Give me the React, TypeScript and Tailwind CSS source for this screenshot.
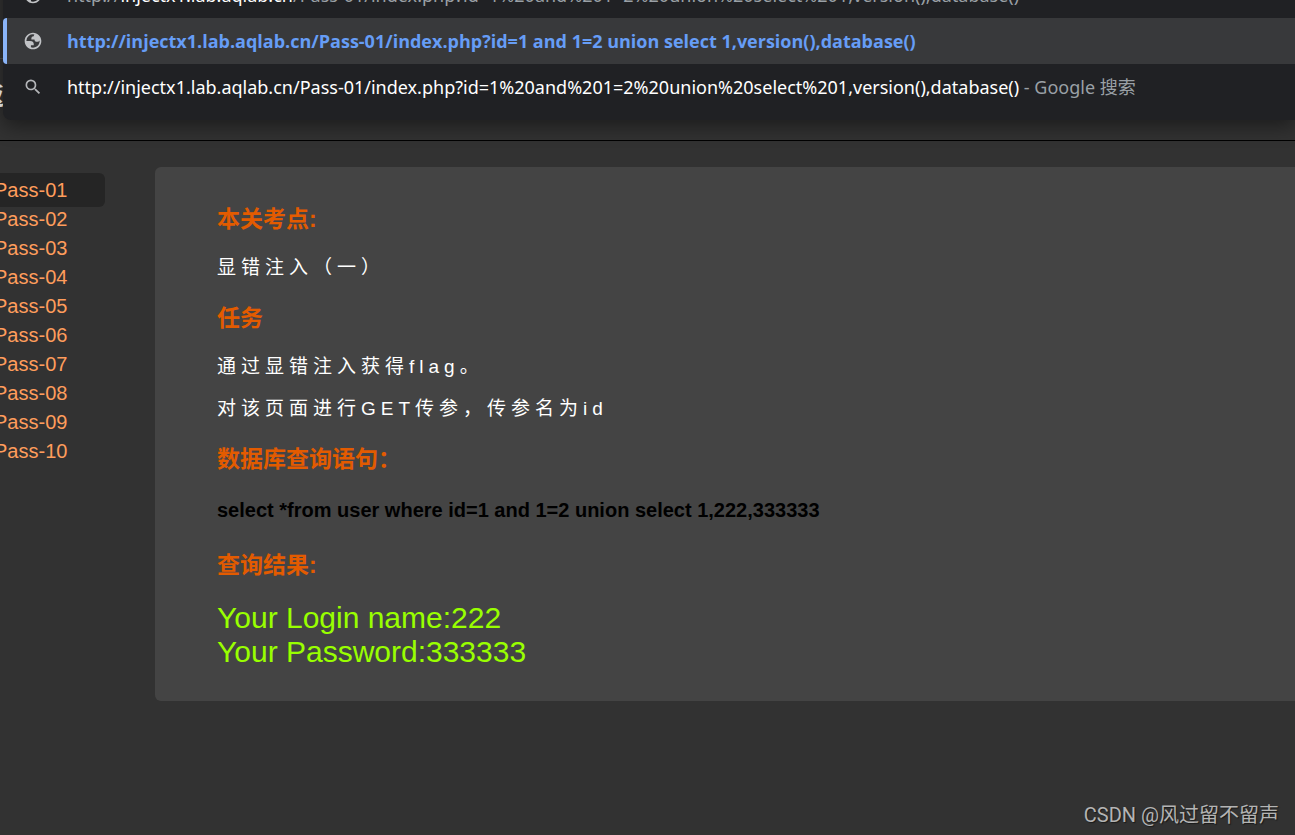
import React from "react";

const passes = ["01", "02", "03", "04", "05", "06", "07", "08", "09", "10"];

function GlobeIcon() {
  return (
    <svg viewBox="0 0 24 24" className="size-5 shrink-0 fill-[#c1c3c6]" aria-hidden="true">
      <path
        fillRule="evenodd"
        d="M12 2C6.48 2 2 6.48 2 12s4.48 10 10 10 10-4.48 10-10S17.52 2 12 2zM4 12h4.4c3.407.022 4.922 1.73 4.543 5.127H9.488v2.47a8.004 8.004 0 0 0 10.498-8.083C19.327 12.504 18.332 13 17 13c-2.137 0-3.206-.916-3.206-2.75h-3.748c-.274-2.728.683-4.092 2.87-4.092 0-.975.327-1.597.811-1.97A8.004 8.004 0 0 0 4 12z"
      />
    </svg>
  );
}

function SearchIcon() {
  return (
    <svg viewBox="0 0 24 24" className="size-5 shrink-0 fill-[#b4b6b9]" aria-hidden="true">
      <path d="M15.5 14h-.79l-.28-.27A6.471 6.471 0 0 0 16 9.5 6.5 6.5 0 1 0 9.5 16c1.61 0 3.09-.59 4.23-1.57l.27.28v.79l5 4.99L20.49 19l-4.99-5zm-6 0C7.01 14 5 11.99 5 9.5S7.01 5 9.5 5 14 7.01 14 9.5 11.99 14 9.5 14z" />
    </svg>
  );
}

function Suggestions() {
  return (
    <ul className="absolute -top-[28px] right-0 left-[3px] rounded-bl-lg bg-[#202124] pb-[10px] font-['Noto_Sans','Noto_Sans_CJK_SC',sans-serif] text-[18px] whitespace-nowrap shadow-[0_6px_20px_rgba(0,0,0,0.45)]">
      <li className="flex h-[46px] items-center gap-6 pl-5 text-[#9aa0a6]">
        <GlobeIcon />
        <span>
          http://<span className="text-white">injectx1.lab.aqlab.cn</span>
          /Pass-01/index.php?id=1%20and%201=2%20union%20select%201,version(),database()
        </span>
      </li>
      <li className="flex h-[46px] items-center gap-6 rounded-l-sm border-l-4 border-[#8ab4f8] bg-[#38393b] pl-4 font-['Open_Sans',sans-serif] font-bold text-[#669df6]">
        <GlobeIcon />
        <span>http://injectx1.lab.aqlab.cn/Pass-01/index.php?id=1 and 1=2 union select 1,version(),database()</span>
      </li>
      <li className="flex h-[46px] items-center gap-6 pl-5 text-white">
        <SearchIcon />
        <span>
          http://injectx1.lab.aqlab.cn/Pass-01/index.php?id=1%20and%201=2%20union%20select%201,version(),database()
          <span className="text-[#9aa0a6]"> - Google 搜索</span>
        </span>
      </li>
    </ul>
  );
}

function Heading({ children }: { children: React.ReactNode }) {
  return <h2 className="text-[23px] leading-[30px] font-bold text-[#e35b00]">{children}</h2>;
}

export default function App() {
  return (
    <div className="flex min-h-screen flex-col overflow-hidden bg-[#323232] font-['Liberation_Sans','Noto_Sans_CJK_SC',sans-serif]">
      <header className="relative h-[141px] border-b border-black">
        <div className="mt-[58px] border-t border-[#4c4c4c] pt-6">
          <h1 className="-ml-5 text-2xl leading-7 font-bold text-white">返</h1>
        </div>
        <Suggestions />
      </header>
      <div className="flex flex-1 items-start">
        <nav className="w-[155px] shrink-0 pt-[35px]">
          <ul className="-ml-[6px] text-xl leading-[29px] text-[#ff9d5c]">
            {passes.map((n, i) => (
              <li key={n}>
                <a href={`#pass-${n}`} className={i === 0 ? "rounded-md bg-[#252525] py-[6px] pr-[38px]" : ""}>
                  Pass-{n}
                </a>
              </li>
            ))}
          </ul>
        </nav>
        <main className="mt-[26px] min-w-0 flex-1 rounded-l-md bg-[#444] pt-[37px] pr-6 pb-8 pl-[62px]">
          <Heading>本关考点:</Heading>
          <p className="mt-[19px] text-[19px] leading-[30px] tracking-[5px] text-white">显错注入（一）</p>
          <div className="mt-5">
            <Heading>任务</Heading>
          </div>
          <p className="mt-[19px] text-[19px] leading-[30px] tracking-[5px] text-white">通过显错注入获得flag。</p>
          <p className="mt-3 text-[19px] leading-[30px] tracking-[5px] text-white">对该页面进行GET传参，传参名为id</p>
          <div className="mt-5">
            <Heading>数据库查询语句：</Heading>
          </div>
          <p className="mt-[21px] text-xl leading-[30px] font-bold text-black">
            select *from user where id=1 and 1=2 union select 1,222,333333
          </p>
          <div className="mt-[25px]">
            <Heading>查询结果:</Heading>
          </div>
          <p className="mt-[21px] text-[30px] leading-[34px] text-[#99ff00]">
            Your Login name:222
            <br />
            Your Password:333333
          </p>
        </main>
      </div>
      <footer className="flex justify-end px-4 pb-[6px] font-['Roboto','Noto_Sans_CJK_SC',sans-serif] text-[20px] leading-7 text-[#b4b4b4] [text-shadow:1px_1px_1px_rgba(0,0,0,0.5)]">
        CSDN @风过留不留声
      </footer>
    </div>
  );
}
